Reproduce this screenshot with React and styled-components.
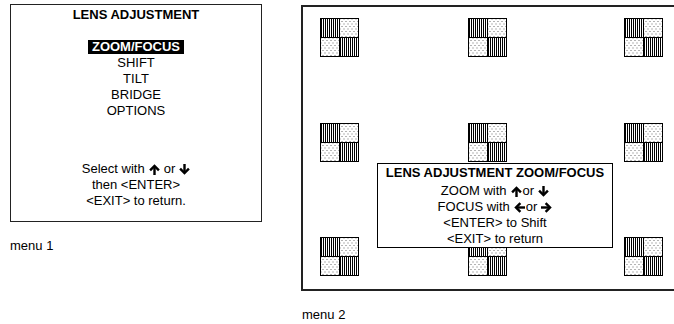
import styled, { createGlobalStyle } from "styled-components";

const GlobalStyle = createGlobalStyle`
  html, body {
    margin: 0;
    padding: 0;
    overflow: hidden;
    background: #fff;
  }
  body {
    font-family: "Liberation Sans", Arial, sans-serif;
    color: #000;
  }
`;

const Page = styled.div`
  display: flex;
  align-items: flex-start;
  gap: 39px;
  padding: 4px 0 0 10px;
`;

const Column = styled.div`
  display: flex;
  flex-direction: column;
  flex-shrink: 0;
  margin-top: ${(p) => p.$offset || 0}px;
`;

const MenuBox = styled.div`
  box-sizing: border-box;
  width: 252px;
  height: 218px;
  border: 1.5px solid #222;
  display: flex;
  flex-direction: column;
  align-items: center;
  padding: 2px 0 12px;
  font-size: 13px;
  line-height: 16px;
`;

const Title = styled.div`
  font-weight: bold;
  margin-bottom: ${(p) => p.$space || 0}px;
  white-space: nowrap;
`;

const Line = styled.div`
  white-space: nowrap;
  display: flex;
  align-items: center;
  justify-content: center;
  height: 16px;
`;

const Selected = styled.span`
  display: inline-block;
  background: #000;
  color: #fff;
  font-weight: bold;
  line-height: 14px;
  padding: 0 4px;
`;

const Hints = styled.div`
  margin-top: auto;
  display: flex;
  flex-direction: column;
  align-items: center;
`;

const Caption = styled.div`
  font-size: 13px;
  line-height: 16px;
  margin-top: 16px;
  padding-left: ${(p) => p.$indent || 0}px;
`;

const Screen = styled.div`
  position: relative;
  box-sizing: border-box;
  width: 376px;
  height: 286px;
  border: 2px solid #222;
  padding: 11px 0 0 17px;
  display: grid;
  grid-template-columns: 148px 156px 39px;
  grid-template-rows: 105px 114px 39px;
  align-items: start;
  justify-items: start;
`;

const Pattern = styled.div`
  display: grid;
  grid-template-columns: 18px 18px;
  grid-template-rows: 18px 18px;
  gap: 1px;
  padding: 1px;
  background: #000;
`;

const Stripes = styled.div`
  background: repeating-linear-gradient(90deg, #000 0 1px, #fff 1px 2px);
`;

const Dots = styled.div`
  background-color: #fff;
  background-image: radial-gradient(circle, #b4b4b4 0.6px, transparent 0.9px),
    radial-gradient(circle, #b4b4b4 0.6px, transparent 0.9px);
  background-size: 4px 5px;
  background-position: 0 0, 2px 2.5px;
`;

const Popup = styled.div`
  position: absolute;
  left: 74px;
  top: 156px;
  box-sizing: border-box;
  width: 236px;
  height: 85px;
  border: 1px solid #000;
  background: #fff;
  display: flex;
  flex-direction: column;
  align-items: center;
  padding-top: 1px;
  font-size: 13px;
  line-height: 16px;
`;

const ArrowIcon = styled.svg`
  width: 11px;
  height: 11px;
  margin: ${(p) => p.$margin || "0 3px"};
  flex-shrink: 0;
`;

const rotations = { up: 0, right: 90, down: 180, left: 270 };

const Arrow = ({ dir, margin }) => (
  <ArrowIcon viewBox="0 0 10 10" $margin={margin}>
    <g transform={`rotate(${rotations[dir]} 5 5)`} stroke="#000" fill="none" strokeWidth="2.2">
      <line x1="5" y1="10" x2="5" y2="2" />
      <polyline points="1,5.8 5,1.8 9,5.8" strokeLinejoin="miter" />
    </g>
  </ArrowIcon>
);

const PatternSquare = () => (
  <Pattern>
    <Stripes />
    <Dots />
    <Dots />
    <Stripes />
  </Pattern>
);

const menuItems = ["SHIFT", "TILT", "BRIDGE", "OPTIONS"];

export default function App() {
  return (
    <>
      <GlobalStyle />
      <Page>
        <Column>
          <MenuBox>
            <Title $space={16}>LENS ADJUSTMENT</Title>
            <Line>
              <Selected>ZOOM/FOCUS</Selected>
            </Line>
            {menuItems.map((item) => (
              <Line key={item}>{item}</Line>
            ))}
            <Hints>
              <Line>
                Select with <Arrow dir="up" margin="0 4px 0 4px" />or
                <Arrow dir="down" margin="0 0 0 4px" />
              </Line>
              <Line>then &lt;ENTER&gt;</Line>
              <Line>&lt;EXIT&gt; to return.</Line>
            </Hints>
          </MenuBox>
          <Caption>menu 1</Caption>
        </Column>
        <Column $offset={1}>
          <Screen>
            {Array.from({ length: 9 }, (_, i) => (
              <PatternSquare key={i} />
            ))}
            <Popup>
              <Title $space={2}>LENS ADJUSTMENT ZOOM/FOCUS</Title>
              <Line>
                ZOOM with <Arrow dir="up" margin="0 1px 0 4px" />or
                <Arrow dir="down" margin="0 0 0 4px" />
              </Line>
              <Line>
                FOCUS with <Arrow dir="left" margin="0 1px 0 4px" />or
                <Arrow dir="right" margin="0 0 0 4px" />
              </Line>
              <Line>&lt;ENTER&gt; to Shift</Line>
              <Line>&lt;EXIT&gt; to return</Line>
            </Popup>
          </Screen>
          <Caption $indent={1}>menu 2</Caption>
        </Column>
      </Page>
    </>
  );
}
